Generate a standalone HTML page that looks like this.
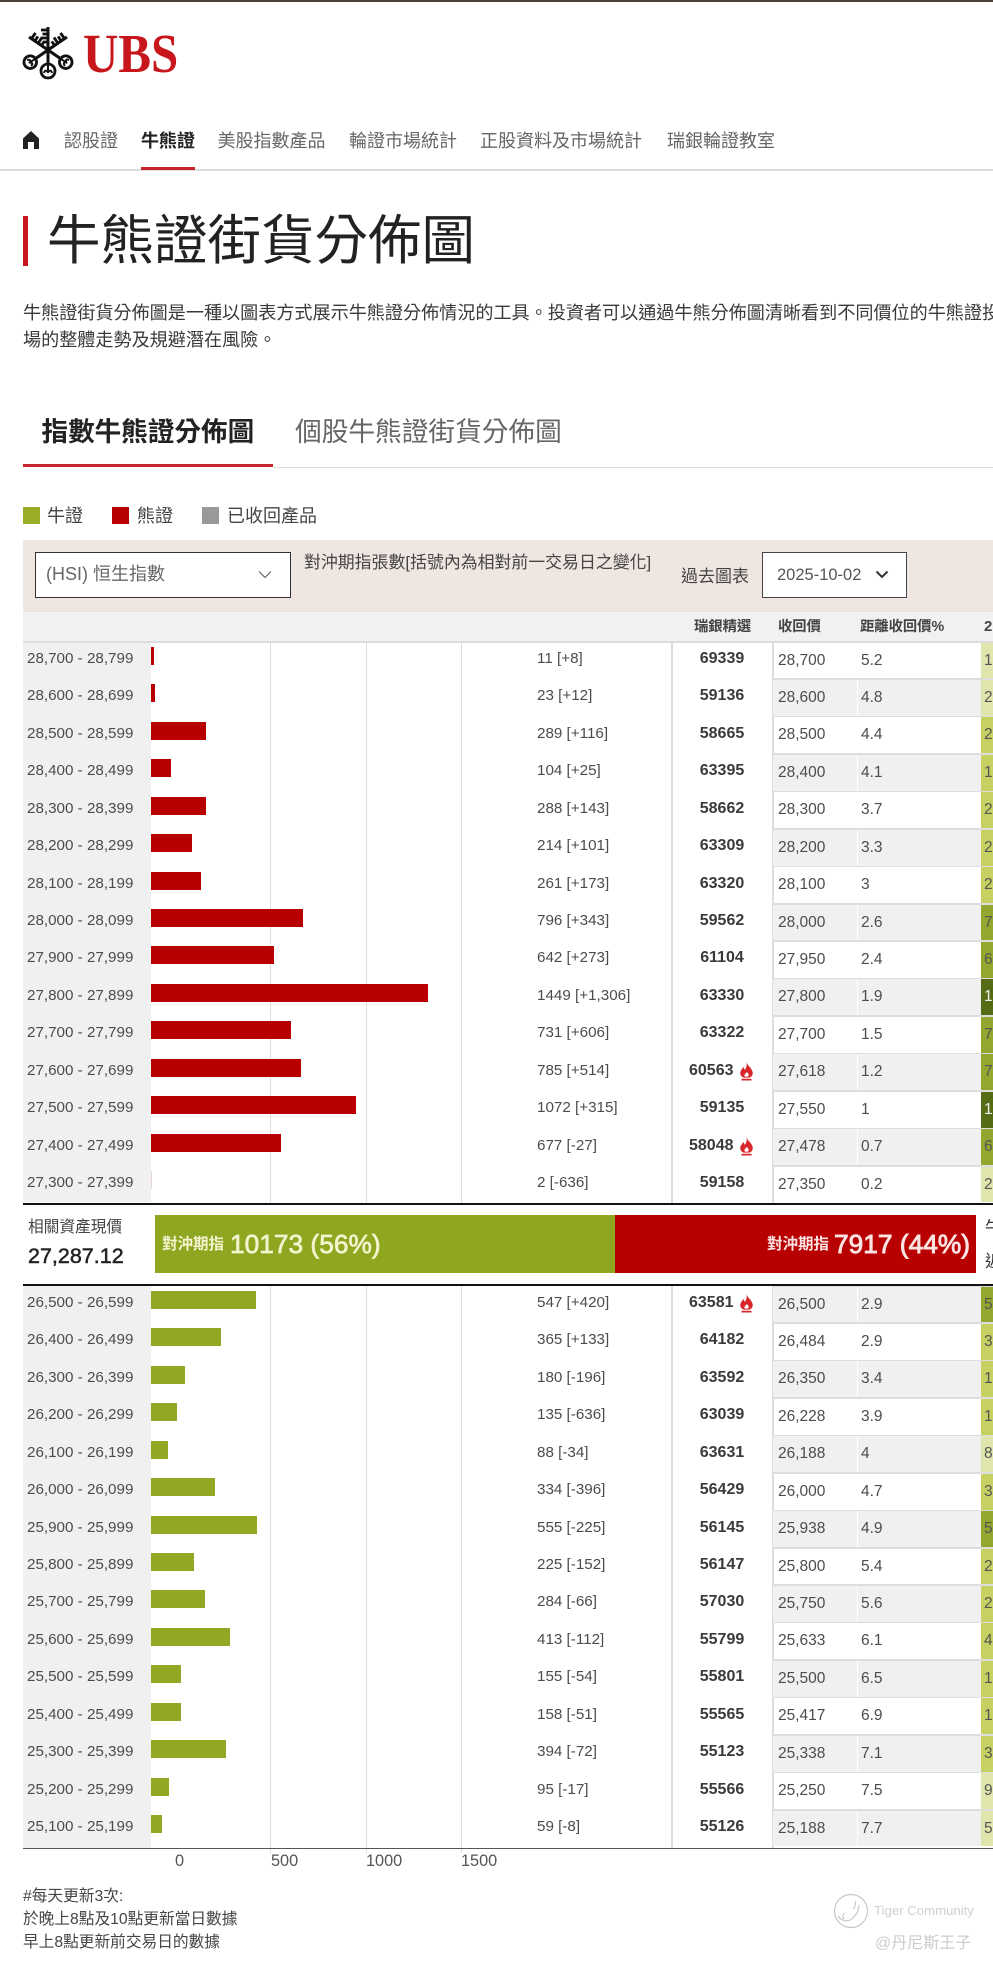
<!DOCTYPE html>
<html lang="zh-Hant"><head><meta charset="utf-8"><title>牛熊證街貨分佈圖</title>
<style>
html,body{margin:0;padding:0;background:#fff}
#w{position:relative;width:993px;height:1965px;overflow:hidden;background:#fff;font-family:"Liberation Sans","Noto Sans CJK TC",sans-serif;color:#333}
#w div,#w span,#w svg,#w i,#w b{position:absolute;white-space:nowrap;font-style:normal}
.nav{top:128px;font-size:18px;line-height:26px;color:#666}
.r{left:0;width:993px;height:37.43px}
.r::after{content:"";position:absolute;left:773px;top:0;width:220px;height:1.5px;background:#ddd}
.r i.l{left:27px;top:1px;font-size:15.2px;line-height:34px;color:#4c4c4c}
.r b.b{left:151px;top:6px;height:18px;background:#b90000}
.g2 b.b{background:#92a824!important}
.r i.v{left:537px;top:1px;font-size:15.2px;line-height:34px;color:#4c4c4c}
.r b.c{left:672px;width:100px;text-align:center;top:1px;font-size:16px;line-height:34px;color:#3a3a3a}
.r b.f{left:689px;top:1px;font-size:16px;line-height:34px;color:#3a3a3a}
.r svg{left:739px;top:9px}
.r i.p,.r i.d{top:1.5px;height:35.9px;font-size:15.5px;line-height:35px;color:#4c4c4c}
.r i.p{left:773px;width:79px;padding-left:5px}
.r i.d{left:858px;width:120px;padding-left:3px}
.g i.p,.g i.d{background:#f0f0f0}
.r i.s{left:981px;width:9px;padding-left:3px;top:1.5px;height:35.9px;font-size:15.5px;line-height:35px;color:#555}
.s1{background:#dfe5ad}.s2{background:#c6d162}.s3{background:#93a62d}
.r i.s4{background:#556b14;color:#eee}
.hd{top:617px;font-size:14.3px;line-height:20px;font-weight:700;color:#444}
.ln{background:#ddd}
</style></head><body><div id="w">

<div style="left:0;top:0;width:993px;height:2px;background:#4a4238"></div>

<svg style="left:0;top:0" width="100" height="100" viewBox="0 0 100 100" fill="none" stroke="#111">
<g>
<path d="M48 27V64" stroke-width="3"/>
<path d="M41 30h7M42.500 34h5.500M41 38h7M43 42h5" stroke-width="2.800"/>
<circle cx="48" cy="71" r="7" stroke-width="2.800"/>
<path d="M48 65v8M44 73c1-4 3-2 4-1 1-1 3-3 4 1" stroke-width="2"/>
</g>
<g transform="rotate(55.6 48 50)">
<path d="M48 27V65" stroke-width="3"/>
<path d="M41 30h7M42.500 34h5.500M41 38h7M43 42h5" stroke-width="2.800"/>
<circle cx="48" cy="71.500" r="6.300" stroke-width="2.800"/>
<path d="M48 66v7M44.500 73c1-4 3-2 3.500-1 1-1 3-3 3.500 1" stroke-width="2"/>
</g>
<g transform="rotate(-55.6 48 50)">
<path d="M48 27V65" stroke-width="3"/>
<path d="M55 30h-7M53.500 34h-5.500M55 38h-7M53 42h-5" stroke-width="2.800"/>
<circle cx="48" cy="71.500" r="6.300" stroke-width="2.800"/>
<path d="M48 66v7M44.500 73c1-4 3-2 3.500-1 1-1 3-3 3.500 1" stroke-width="2"/>
</g>
</svg>
<div style="left:83px;top:22px;font-family:'Liberation Serif',serif;font-weight:700;font-size:55px;line-height:64px;color:#c8161d;transform:scaleX(.89);transform-origin:0 0">UBS</div>

<svg style="left:23px;top:131px" width="16" height="18" viewBox="0 0 16 18"><path fill="#222" d="M8 0L16 7.500V18H11V11H5V18H0V7.500Z"/></svg>
<div class="nav" style="left:64px">認股證</div>
<div class="nav" style="left:141px;color:#222;font-weight:700">牛熊證</div>
<div class="nav" style="left:217.500px">美股指數產品</div>
<div class="nav" style="left:349px">輪證市場統計</div>
<div class="nav" style="left:480px">正股資料及市場統計</div>
<div class="nav" style="left:667px">瑞銀輪證教室</div>
<div style="left:0;top:169px;width:993px;height:1.500px;background:#ddd"></div>
<div style="left:141px;top:167px;width:54px;height:2.500px;background:#c8242c"></div>

<div style="left:23px;top:216px;width:5px;height:50px;background:#c8161d"></div>
<div style="left:47px;top:206px;font-size:53.500px;line-height:72px;font-weight:400;color:#222">牛熊證街貨分佈圖</div>

<div style="left:23px;top:300px;font-size:18.100px;line-height:27px;color:#3a3a3a">牛熊證街貨分佈圖是一種以圖表方式展示牛熊證分佈情況的工具。投資者可以通過牛熊分佈圖清晰看到不同價位的牛熊證投資</div>
<div style="left:23px;top:327px;font-size:18.100px;line-height:27px;color:#3a3a3a">場的整體走勢及規避潛在風險。</div>

<div style="left:41.500px;top:413px;font-size:26.600px;line-height:38px;font-weight:700;color:#222">指數牛熊證分佈圖</div>
<div style="left:295px;top:413px;font-size:26.700px;line-height:38px;color:#666">個股牛熊證街貨分佈圖</div>
<div style="left:23px;top:464px;width:250px;height:3px;background:#c8242c"></div>
<div style="left:273px;top:466.500px;width:720px;height:1px;background:#ddd"></div>

<div style="left:23px;top:507px;width:17px;height:17px;background:#9bad27"></div>
<div style="left:47px;top:503px;font-size:18px;line-height:26px;color:#444">牛證</div>
<div style="left:112px;top:507px;width:17px;height:17px;background:#b90000"></div>
<div style="left:137px;top:503px;font-size:18px;line-height:26px;color:#444">熊證</div>
<div style="left:202px;top:507px;width:17px;height:17px;background:#999"></div>
<div style="left:227px;top:503px;font-size:18px;line-height:26px;color:#444">已收回產品</div>

<div style="left:23px;top:540px;width:970px;height:71px;background:#f0e6e1"></div>
<div style="left:23px;top:611px;width:970px;height:30px;background:#f1f1f1;border-top:1px solid #e4e4e4;box-sizing:border-box"></div>
<div style="left:35px;top:552px;width:254px;height:44px;background:#fff;border:1px solid #333"></div>
<div style="left:46px;top:561px;font-size:18px;line-height:26px;color:#666">(HSI) 恒生指數</div>
<svg style="left:258px;top:570px" width="14" height="9" viewBox="0 0 14 9" fill="none" stroke="#555" stroke-width="1"><path d="M1 1.500L7 7.500L13 1.500"/></svg>
<div style="left:304px;top:550px;font-size:16.900px;line-height:26px;color:#444">對沖期指張數[括號內為相對前一交易日之變化]</div>
<div style="left:681px;top:564px;font-size:17px;line-height:26px;color:#444">過去圖表</div>
<div style="left:762px;top:552px;width:143px;height:44px;background:#fff;border:1px solid #444"></div>
<div style="left:777px;top:562px;font-size:16.500px;line-height:26px;color:#555">2025-10-02</div>
<svg style="left:875px;top:570px" width="14" height="9" viewBox="0 0 14 9" fill="none" stroke="#333" stroke-width="2"><path d="M1.500 1.500L7 7L12.500 1.500"/></svg>

<div class="hd" style="left:694px">瑞銀精選</div>
<div class="hd" style="left:778px">收回價</div>
<div class="hd" style="left:860px">距離收回價%</div>
<div class="hd" style="left:984px;font-size:15px">2</div>

<div style="left:23px;top:641px;width:128px;height:561px;background:#f0f0f0"></div>
<div style="left:23px;top:1285px;width:128px;height:563px;background:#f0f0f0"></div>
<div style="left:23px;top:641px;width:970px;height:1.500px;background:#ddd"></div>
<div class="ln" style="left:270px;top:641px;width:1px;height:1212px"></div>
<div class="ln" style="left:366px;top:641px;width:1px;height:1212px"></div>
<div class="ln" style="left:461px;top:641px;width:1px;height:1212px"></div>
<div class="ln" style="left:671px;top:641px;width:1.500px;height:1207px"></div>
<div class="ln" style="left:772px;top:641px;width:1.500px;height:1207px"></div>

<div class="r" style="top:641px"><i class="l">28,700 - 28,799</i><b class="b" style="width:3px"></b><i class="v">11 [+8]</i><b class="c">69339</b><i class="p">28,700</i><i class="d">5.2</i><i class="s s1">1</i></div>
<div class="r g" style="top:678.430px"><i class="l">28,600 - 28,699</i><b class="b" style="width:4.400px"></b><i class="v">23 [+12]</i><b class="c">59136</b><i class="p">28,600</i><i class="d">4.8</i><i class="s s1">2</i></div>
<div class="r" style="top:715.860px"><i class="l">28,500 - 28,599</i><b class="b" style="width:55.300px"></b><i class="v">289 [+116]</i><b class="c">58665</b><i class="p">28,500</i><i class="d">4.4</i><i class="s s2">2</i></div>
<div class="r g" style="top:753.290px"><i class="l">28,400 - 28,499</i><b class="b" style="width:19.900px"></b><i class="v">104 [+25]</i><b class="c">63395</b><i class="p">28,400</i><i class="d">4.1</i><i class="s s2">1</i></div>
<div class="r" style="top:790.720px"><i class="l">28,300 - 28,399</i><b class="b" style="width:55.100px"></b><i class="v">288 [+143]</i><b class="c">58662</b><i class="p">28,300</i><i class="d">3.7</i><i class="s s2">2</i></div>
<div class="r g" style="top:828.150px"><i class="l">28,200 - 28,299</i><b class="b" style="width:40.900px"></b><i class="v">214 [+101]</i><b class="c">63309</b><i class="p">28,200</i><i class="d">3.3</i><i class="s s2">2</i></div>
<div class="r" style="top:865.580px"><i class="l">28,100 - 28,199</i><b class="b" style="width:49.900px"></b><i class="v">261 [+173]</i><b class="c">63320</b><i class="p">28,100</i><i class="d">3</i><i class="s s2">2</i></div>
<div class="r g" style="top:903.010px"><i class="l">28,000 - 28,099</i><b class="b" style="width:152.300px"></b><i class="v">796 [+343]</i><b class="c">59562</b><i class="p">28,000</i><i class="d">2.6</i><i class="s s3">7</i></div>
<div class="r" style="top:940.440px"><i class="l">27,900 - 27,999</i><b class="b" style="width:122.800px"></b><i class="v">642 [+273]</i><b class="c">61104</b><i class="p">27,950</i><i class="d">2.4</i><i class="s s3">6</i></div>
<div class="r g" style="top:977.870px"><i class="l">27,800 - 27,899</i><b class="b" style="width:277.200px"></b><i class="v">1449 [+1,306]</i><b class="c">63330</b><i class="p">27,800</i><i class="d">1.9</i><i class="s s4">1</i></div>
<div class="r" style="top:1015.300px"><i class="l">27,700 - 27,799</i><b class="b" style="width:139.800px"></b><i class="v">731 [+606]</i><b class="c">63322</b><i class="p">27,700</i><i class="d">1.5</i><i class="s s3">7</i></div>
<div class="r g" style="top:1052.730px"><i class="l">27,600 - 27,699</i><b class="b" style="width:150.200px"></b><i class="v">785 [+514]</i><b class="f">60563</b><svg width="15" height="19" viewBox="0 0 13 17"><path fill="#d8262c" d="M6.500 0C7 3 11 5 12 9C12.500 11.500 11 13.500 9 14H4C2 13.500 .5 11.500 1 9C1.500 7 3 6 3.500 4.500C4.500 5.500 4.500 6.500 5 7C6.500 5 7 3 6.500 0ZM2 15H11V16.500H2Z"/><path fill="#fff" d="M6.500 9C8 10 8.800 11 8.300 12.300C7.800 13.500 5.200 13.500 4.700 12.300C4.200 11 6 10.500 6.500 9Z"/></svg><i class="p">27,618</i><i class="d">1.2</i><i class="s s3">7</i></div>
<div class="r" style="top:1090.160px"><i class="l">27,500 - 27,599</i><b class="b" style="width:205.100px"></b><i class="v">1072 [+315]</i><b class="c">59135</b><i class="p">27,550</i><i class="d">1</i><i class="s s4">1</i></div>
<div class="r g" style="top:1127.590px"><i class="l">27,400 - 27,499</i><b class="b" style="width:129.500px"></b><i class="v">677 [-27]</i><b class="f">58048</b><svg width="15" height="19" viewBox="0 0 13 17"><path fill="#d8262c" d="M6.500 0C7 3 11 5 12 9C12.500 11.500 11 13.500 9 14H4C2 13.500 .5 11.500 1 9C1.500 7 3 6 3.500 4.500C4.500 5.500 4.500 6.500 5 7C6.500 5 7 3 6.500 0ZM2 15H11V16.500H2Z"/><path fill="#fff" d="M6.500 9C8 10 8.800 11 8.300 12.300C7.800 13.500 5.200 13.500 4.700 12.300C4.200 11 6 10.500 6.500 9Z"/></svg><i class="p">27,478</i><i class="d">0.7</i><i class="s s3">6</i></div>
<div class="r" style="top:1165.020px"><i class="l">27,300 - 27,399</i><b class="b" style="width:1px;background:#e8d5d5"></b><i class="v">2 [-636]</i><b class="c">59158</b><i class="p">27,350</i><i class="d">0.2</i><i class="s s1">2</i></div>

<div style="left:23px;top:1202.500px;width:970px;height:2.500px;background:#111"></div>
<div style="left:0;top:1205px;width:993px;height:78.500px;background:#fff"></div>
<div style="left:28px;top:1215px;font-size:15.700px;line-height:26px;color:#444">相關資產現價</div>
<div style="left:28px;top:1243px;font-size:21.500px;line-height:26px;font-weight:400;color:#222;-webkit-text-stroke:.5px #222">27,287.12</div>
<div style="left:155px;top:1215px;width:460px;height:58px;background:#8fa621"></div>
<div style="left:615px;top:1215px;width:361px;height:58px;background:#b90000"></div>
<div style="left:162px;top:1234px;font-size:15.500px;line-height:22px;font-weight:700;color:#f4f4cf">對沖期指</div>
<div style="left:230px;top:1229px;font-size:26.300px;line-height:30px;color:#f4f4cf;-webkit-text-stroke:.7px #f4f4cf">10173 (56%)</div>
<div style="left:767px;top:1234px;font-size:15.500px;line-height:22px;font-weight:700;color:#fbe3e3">對沖期指</div>
<div style="left:834px;top:1229px;font-size:26.300px;line-height:30px;color:#fbe3e3;-webkit-text-stroke:.9px #fbe3e3">7917 (44%)</div>
<div style="left:985px;top:1216px;font-size:17px;line-height:24px;color:#333">牛</div>
<div style="left:985px;top:1250px;font-size:17px;line-height:24px;color:#333">近</div>
<div style="left:23px;top:1283.500px;width:970px;height:2.500px;background:#111;z-index:2"></div>

<div class="r g g2" style="top:1285px"><i class="l">26,500 - 26,599</i><b class="b" style="width:104.600px"></b><i class="v">547 [+420]</i><b class="f">63581</b><svg width="15" height="19" viewBox="0 0 13 17"><path fill="#d8262c" d="M6.500 0C7 3 11 5 12 9C12.500 11.500 11 13.500 9 14H4C2 13.500 .5 11.500 1 9C1.500 7 3 6 3.500 4.500C4.500 5.500 4.500 6.500 5 7C6.500 5 7 3 6.500 0ZM2 15H11V16.500H2Z"/><path fill="#fff" d="M6.500 9C8 10 8.800 11 8.300 12.300C7.800 13.500 5.200 13.500 4.700 12.300C4.200 11 6 10.500 6.500 9Z"/></svg><i class="p">26,500</i><i class="d">2.9</i><i class="s s3">5</i></div>
<div class="r g2" style="top:1322.430px"><i class="l">26,400 - 26,499</i><b class="b" style="width:69.800px"></b><i class="v">365 [+133]</i><b class="c">64182</b><i class="p">26,484</i><i class="d">2.9</i><i class="s s2">3</i></div>
<div class="r g g2" style="top:1359.860px"><i class="l">26,300 - 26,399</i><b class="b" style="width:34.400px"></b><i class="v">180 [-196]</i><b class="c">63592</b><i class="p">26,350</i><i class="d">3.4</i><i class="s s2">1</i></div>
<div class="r g2" style="top:1397.290px"><i class="l">26,200 - 26,299</i><b class="b" style="width:25.800px"></b><i class="v">135 [-636]</i><b class="c">63039</b><i class="p">26,228</i><i class="d">3.9</i><i class="s s2">1</i></div>
<div class="r g g2" style="top:1434.720px"><i class="l">26,100 - 26,199</i><b class="b" style="width:16.800px"></b><i class="v">88 [-34]</i><b class="c">63631</b><i class="p">26,188</i><i class="d">4</i><i class="s s1">8</i></div>
<div class="r g2" style="top:1472.150px"><i class="l">26,000 - 26,099</i><b class="b" style="width:63.900px"></b><i class="v">334 [-396]</i><b class="c">56429</b><i class="p">26,000</i><i class="d">4.7</i><i class="s s2">3</i></div>
<div class="r g g2" style="top:1509.580px"><i class="l">25,900 - 25,999</i><b class="b" style="width:106.200px"></b><i class="v">555 [-225]</i><b class="c">56145</b><i class="p">25,938</i><i class="d">4.9</i><i class="s s3">5</i></div>
<div class="r g2" style="top:1547.010px"><i class="l">25,800 - 25,899</i><b class="b" style="width:43px"></b><i class="v">225 [-152]</i><b class="c">56147</b><i class="p">25,800</i><i class="d">5.4</i><i class="s s2">2</i></div>
<div class="r g g2" style="top:1584.440px"><i class="l">25,700 - 25,799</i><b class="b" style="width:54.300px"></b><i class="v">284 [-66]</i><b class="c">57030</b><i class="p">25,750</i><i class="d">5.6</i><i class="s s2">2</i></div>
<div class="r g2" style="top:1621.870px"><i class="l">25,600 - 25,699</i><b class="b" style="width:79px"></b><i class="v">413 [-112]</i><b class="c">55799</b><i class="p">25,633</i><i class="d">6.1</i><i class="s s2">4</i></div>
<div class="r g g2" style="top:1659.300px"><i class="l">25,500 - 25,599</i><b class="b" style="width:29.700px"></b><i class="v">155 [-54]</i><b class="c">55801</b><i class="p">25,500</i><i class="d">6.5</i><i class="s s2">1</i></div>
<div class="r g2" style="top:1696.730px"><i class="l">25,400 - 25,499</i><b class="b" style="width:30.200px"></b><i class="v">158 [-51]</i><b class="c">55565</b><i class="p">25,417</i><i class="d">6.9</i><i class="s s2">1</i></div>
<div class="r g g2" style="top:1734.160px"><i class="l">25,300 - 25,399</i><b class="b" style="width:75.400px"></b><i class="v">394 [-72]</i><b class="c">55123</b><i class="p">25,338</i><i class="d">7.1</i><i class="s s2">3</i></div>
<div class="r g2" style="top:1771.590px"><i class="l">25,200 - 25,299</i><b class="b" style="width:18.200px"></b><i class="v">95 [-17]</i><b class="c">55566</b><i class="p">25,250</i><i class="d">7.5</i><i class="s s1">9</i></div>
<div class="r g g2" style="top:1809.020px"><i class="l">25,100 - 25,199</i><b class="b" style="width:11.300px"></b><i class="v">59 [-8]</i><b class="c">55126</b><i class="p">25,188</i><i class="d">7.7</i><i class="s s1">5</i></div>

<div style="left:23px;top:1847.500px;width:970px;height:1.500px;background:#555"></div>
<div style="left:175px;top:1851px;font-size:16.300px;line-height:20px;color:#555">0</div>
<div style="left:271px;top:1851px;font-size:16.300px;line-height:20px;color:#555">500</div>
<div style="left:366px;top:1851px;font-size:16.300px;line-height:20px;color:#555">1000</div>
<div style="left:461px;top:1851px;font-size:16.300px;line-height:20px;color:#555">1500</div>

<div style="left:23px;top:1885px;font-size:15.700px;line-height:24px;color:#444">#每天更新3次:</div>
<div style="left:23px;top:1908px;font-size:15.700px;line-height:24px;color:#444">於晚上8點及10點更新當日數據</div>
<div style="left:23px;top:1931px;font-size:15.700px;line-height:24px;color:#444">早上8點更新前交易日的數據</div>

<svg style="left:832px;top:1892px" width="38" height="38" viewBox="0 0 38 38" fill="none" stroke="#c8c8c8" stroke-width="1.200"><circle cx="19" cy="19" r="16.500"/><path d="M6 24c4 6 11 6 15 2s6-9 6-13M12 27c-2-3-1-5 1-6M23 9c1 3 0 6-2 8"/></svg>
<div style="left:874px;top:1902px;font-size:13.200px;line-height:18px;color:#d0d0d0">Tiger Community</div>
<div style="left:875px;top:1932px;font-size:16px;line-height:24px;color:#ccc">@丹尼斯王子</div>

</div></body></html>
